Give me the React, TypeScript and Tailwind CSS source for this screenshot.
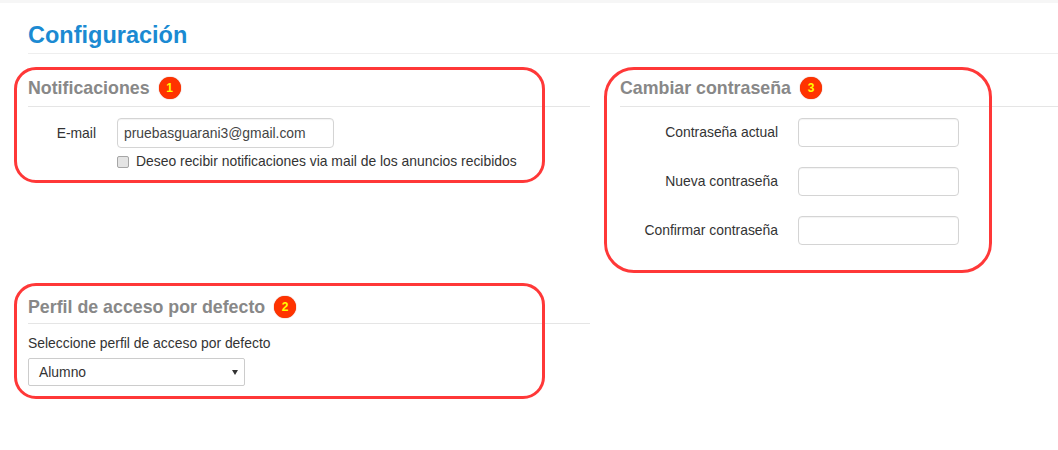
import type { ReactNode } from 'react';

function Badge({ n }: { n: number }) {
  return (
    <span className="ml-[9px] flex h-[22px] w-[22px] shrink-0 items-center justify-center rounded-full bg-[#ff3300] text-[12px] font-bold leading-none text-[#ffff00] shadow-[0_0_1px_#c02000]">
      {n}
    </span>
  );
}

function SectionTitle({ children, badge, pb }: { children: ReactNode; badge: number; pb: string }) {
  return (
    <div className={`flex h-[20px] items-center border-b border-[#e5e5e5] box-content ${pb}`}>
      <h2 className="text-[17.8px] font-bold leading-[20px] text-[#888]">{children}</h2>
      <Badge n={badge} />
    </div>
  );
}

function TextInput({ value, className }: { value?: string; className: string }) {
  return (
    <div
      className={`flex items-center rounded-[4px] border border-[#d4d4d4] bg-white px-[6px] text-[13.9px] text-[#444] shadow-[inset_0_1px_1px_rgba(0,0,0,0.05)] ${className}`}>
      {value}
    </div>
  );
}

const passwordRows = ['Contraseña actual', 'Nueva contraseña', 'Confirmar contraseña'];

export default function App() {
  return (
    <div className="relative h-[450px] w-[1058px] overflow-hidden border-t-[3px] border-[#f6f6f6] bg-white font-['Liberation_Sans',Arial,sans-serif] text-[13.9px] text-[#333]">
      <div className="pl-[28px]">
        <h1 className="mt-[19px] border-b border-[#eee] pb-[5px] text-[23.5px] font-bold leading-[26px] text-[#1b8ad2]">
          Configuración
        </h1>

        <div className="flex gap-[30px]">
          {/* left column */}
          <div className="w-[562px]">
            <div className="mt-[24px]">
              <SectionTitle badge={1} pb="pb-[8px]">
                Notificaciones
              </SectionTitle>
              <div className="mt-[11px] flex items-center gap-[21px]">
                <label className="w-[68px] text-right">E-mail</label>
                <TextInput value="pruebasguarani3@gmail.com" className="h-[30px] w-[217px]" />
              </div>
              <div className="ml-[89px] mt-[7px] flex h-[13px] items-center gap-[7px]">
                <span className="h-[12px] w-[12px] rounded-[2px] border border-[#a6a6a6] bg-[#e4e4e4]" />
                <span className="leading-[13px]">Deseo recibir notificaciones via mail de los anuncios recibidos</span>
              </div>
            </div>

            <div className="mt-[129px]">
              <SectionTitle badge={2} pb="pb-[6px]">
                Perfil de acceso por defecto
              </SectionTitle>
              <p className="mt-[10px] leading-[18px]">Seleccione perfil de acceso por defecto</p>
              <div className="mt-[6px] flex h-[28px] w-[217px] items-center justify-between rounded-[2px] border border-[#ccc] bg-white pl-[10px] pr-[6px]">
                <span>Alumno</span>
                <svg width="6" height="5" viewBox="0 0 6 5">
                  <path d="M0 0h6L3 5z" fill="#333" />
                </svg>
              </div>
            </div>
          </div>

          {/* right column */}
          <div className="flex-1">
            <div className="mt-[24px]">
              <SectionTitle badge={3} pb="pb-[8px]">
                Cambiar contraseña
              </SectionTitle>
              <div className="mt-[11px] flex flex-col gap-[20px]">
                {passwordRows.map((label) => (
                  <div key={label} className="flex items-center gap-[20px]">
                    <label className="w-[158px] text-right">{label}</label>
                    <TextInput className="h-[29px] w-[161px]" />
                  </div>
                ))}
              </div>
            </div>
          </div>
        </div>
      </div>

      {/* annotation outlines */}
      <div className="pointer-events-none absolute left-[14px] top-[64px] h-[116px] w-[531px] rounded-[22px] border-[3px] border-[#ff3838]" />
      <div className="pointer-events-none absolute left-[14px] top-[280px] h-[116px] w-[531px] rounded-[22px] border-[3px] border-[#ff3838]" />
      <div className="pointer-events-none absolute left-[604px] top-[64px] h-[206px] w-[388px] rounded-[30px] border-[3px] border-[#ff3838]" />
    </div>
  );
}
